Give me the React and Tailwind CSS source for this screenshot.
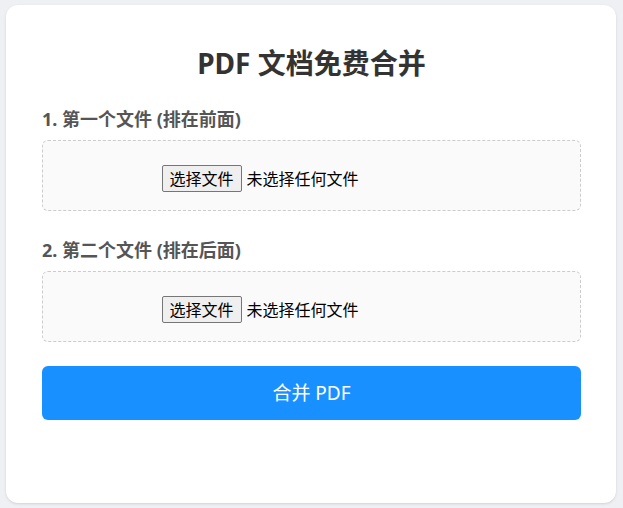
export default function App() {
  const font = { fontFamily: '"Noto Sans", "Noto Sans CJK SC", sans-serif' };

  function FilePicker() {
    return (
      <div className="h-[71px] rounded-md border border-dashed border-[#cccccc] bg-[#fafafa] flex items-center justify-center pt-[6px]">
        <label className="w-[300px] flex items-center text-[16px] text-black cursor-pointer">
          <input type="file" accept="application/pdf" className="hidden" />
          <span className="h-[27px] px-[7px] flex items-center bg-[#efefef] border border-[#767676] rounded-[2px] leading-none">
            选择文件
          </span>
          <span className="ml-[5px] leading-none">未选择任何文件</span>
        </label>
      </div>
    );
  }

  return (
    <div className="min-h-screen bg-[#eef0f3] pt-[5px] pl-[6px] pr-[7px] pb-[5px]" style={font}>
      <div className="h-[498px] bg-white rounded-xl shadow-sm pl-[36px] pr-[35px] pt-[41px]">
        <h1 className="text-center text-[28px] font-bold text-[#333333] leading-[34px]">
          PDF 文档免费合并
        </h1>

        <div className="mt-[27px]">
          <p className="text-[18px] font-bold text-[#555555] leading-[24px] mb-[9px]">
            1. 第一个文件 (排在前面)
          </p>
          <FilePicker />
        </div>

        <div className="mt-[27px]">
          <p className="text-[18px] font-bold text-[#555555] leading-[24px] mb-[9px]">
            2. 第二个文件 (排在后面)
          </p>
          <FilePicker />
        </div>

        <button className="mt-[24px] w-full h-[54px] rounded-md bg-[#1890ff] text-white text-[19px]">
          合并 PDF
        </button>
      </div>
    </div>
  );
}
